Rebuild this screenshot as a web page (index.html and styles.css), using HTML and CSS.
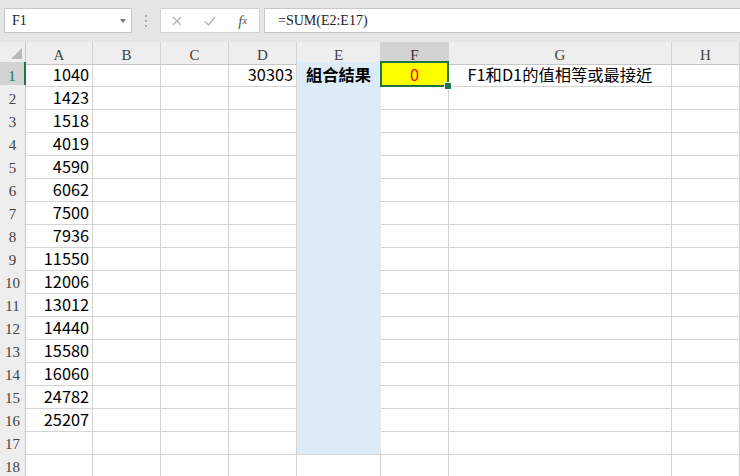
FILE: index.html
```html
<!DOCTYPE html>
<html lang="zh-TW">
<head>
    <meta charset="UTF-8">
    <title>組合結果</title>
    <link rel="stylesheet" href="styles.css">
</head>
<body>
    <div class="toolbar">
        <div class="name-box">
            <span>F1</span>
            <span class="arrow"></span>
        </div>
        <div class="grip"><span></span><span></span><span></span></div>
        <div class="fx-buttons">
            <span class="btn">
                <svg width="10" height="10" viewBox="0 0 10 10"><path d="M1 1L9 9M9 1L1 9" stroke="#b3b3b3" stroke-width="1.2" fill="none"/></svg>
            </span>
            <span class="btn">
                <svg width="12" height="10" viewBox="0 0 12 10"><path d="M1 5.5L4.5 9L11 1" stroke="#b3b3b3" stroke-width="1.3" fill="none"/></svg>
            </span>
            <span class="btn fx">f<sub>x</sub></span>
        </div>
        <div class="formula">=SUM(E2:E17)</div>
    </div>

    <div class="sheet">
        <div class="row head">
            <div class="corner">
                <svg width="26" height="19" viewBox="0 0 26 19"><polygon points="22,6 22,17 11,17" fill="#b8b8b8"/></svg>
            </div>
            <div class="ch">A</div><div class="ch">B</div><div class="ch">C</div><div class="ch">D</div>
            <div class="ch">E</div><div class="ch sel">F</div><div class="ch">G</div><div class="ch">H</div>
        </div>

        <div class="row">
            <div class="rh sel">1</div>
            <div class="c n">1040</div><div class="c"></div><div class="c"></div><div class="c n">30303</div>
            <div class="c ctr fill bold">組合結果</div>
            <div class="c ctr active">0</div>
            <div class="c ctr">F1和D1的值相等或最接近</div>
            <div class="c"></div>
        </div>
        <div class="row">
            <div class="rh">2</div>
            <div class="c n">1423</div><div class="c"></div><div class="c"></div><div class="c"></div>
            <div class="c fill"></div><div class="c"></div><div class="c"></div><div class="c"></div>
        </div>
        <div class="row">
            <div class="rh">3</div>
            <div class="c n">1518</div><div class="c"></div><div class="c"></div><div class="c"></div>
            <div class="c fill"></div><div class="c"></div><div class="c"></div><div class="c"></div>
        </div>
        <div class="row">
            <div class="rh">4</div>
            <div class="c n">4019</div><div class="c"></div><div class="c"></div><div class="c"></div>
            <div class="c fill"></div><div class="c"></div><div class="c"></div><div class="c"></div>
        </div>
        <div class="row">
            <div class="rh">5</div>
            <div class="c n">4590</div><div class="c"></div><div class="c"></div><div class="c"></div>
            <div class="c fill"></div><div class="c"></div><div class="c"></div><div class="c"></div>
        </div>
        <div class="row">
            <div class="rh">6</div>
            <div class="c n">6062</div><div class="c"></div><div class="c"></div><div class="c"></div>
            <div class="c fill"></div><div class="c"></div><div class="c"></div><div class="c"></div>
        </div>
        <div class="row">
            <div class="rh">7</div>
            <div class="c n">7500</div><div class="c"></div><div class="c"></div><div class="c"></div>
            <div class="c fill"></div><div class="c"></div><div class="c"></div><div class="c"></div>
        </div>
        <div class="row">
            <div class="rh">8</div>
            <div class="c n">7936</div><div class="c"></div><div class="c"></div><div class="c"></div>
            <div class="c fill"></div><div class="c"></div><div class="c"></div><div class="c"></div>
        </div>
        <div class="row">
            <div class="rh">9</div>
            <div class="c n">11550</div><div class="c"></div><div class="c"></div><div class="c"></div>
            <div class="c fill"></div><div class="c"></div><div class="c"></div><div class="c"></div>
        </div>
        <div class="row">
            <div class="rh">10</div>
            <div class="c n">12006</div><div class="c"></div><div class="c"></div><div class="c"></div>
            <div class="c fill"></div><div class="c"></div><div class="c"></div><div class="c"></div>
        </div>
        <div class="row">
            <div class="rh">11</div>
            <div class="c n">13012</div><div class="c"></div><div class="c"></div><div class="c"></div>
            <div class="c fill"></div><div class="c"></div><div class="c"></div><div class="c"></div>
        </div>
        <div class="row">
            <div class="rh">12</div>
            <div class="c n">14440</div><div class="c"></div><div class="c"></div><div class="c"></div>
            <div class="c fill"></div><div class="c"></div><div class="c"></div><div class="c"></div>
        </div>
        <div class="row">
            <div class="rh">13</div>
            <div class="c n">15580</div><div class="c"></div><div class="c"></div><div class="c"></div>
            <div class="c fill"></div><div class="c"></div><div class="c"></div><div class="c"></div>
        </div>
        <div class="row">
            <div class="rh">14</div>
            <div class="c n">16060</div><div class="c"></div><div class="c"></div><div class="c"></div>
            <div class="c fill"></div><div class="c"></div><div class="c"></div><div class="c"></div>
        </div>
        <div class="row">
            <div class="rh">15</div>
            <div class="c n">24782</div><div class="c"></div><div class="c"></div><div class="c"></div>
            <div class="c fill"></div><div class="c"></div><div class="c"></div><div class="c"></div>
        </div>
        <div class="row">
            <div class="rh">16</div>
            <div class="c n">25207</div><div class="c"></div><div class="c"></div><div class="c"></div>
            <div class="c fill"></div><div class="c"></div><div class="c"></div><div class="c"></div>
        </div>
        <div class="row">
            <div class="rh">17</div>
            <div class="c"></div><div class="c"></div><div class="c"></div><div class="c"></div>
            <div class="c fill last"></div><div class="c"></div><div class="c"></div><div class="c"></div>
        </div>
        <div class="row">
            <div class="rh">18</div>
            <div class="c"></div><div class="c"></div><div class="c"></div><div class="c"></div>
            <div class="c"></div><div class="c"></div><div class="c"></div><div class="c"></div>
        </div>
    </div>
</body>
</html>
```

FILE: styles.css
```css
* {
    margin: 0;
    padding: 0;
    box-sizing: border-box;
}

body {
    width: 740px;
    height: 476px;
    overflow: hidden;
    background-color: #fff;
    font-family: "Noto Sans CJK TC", sans-serif;
}

/* formula bar */
.toolbar {
    height: 42px;
    background-color: #e6e6e6;
    display: flex;
    align-items: flex-start;
    padding: 8px 0 0 4px;
}

.name-box {
    width: 128px;
    height: 25px;
    background-color: #fff;
    border: 1px solid #c6c6c6;
    display: flex;
    align-items: center;
    justify-content: space-between;
    padding: 0 5px 0 7px;
    font-family: "Liberation Serif", serif;
    font-size: 14px;
    color: #222;
}

.name-box .arrow {
    width: 0;
    height: 0;
    border-left: 3.5px solid transparent;
    border-right: 3.5px solid transparent;
    border-top: 4px solid #777;
}

.grip {
    width: 28px;
    height: 25px;
    display: flex;
    flex-direction: column;
    align-items: center;
    justify-content: center;
    gap: 3px;
}

.grip span {
    width: 2px;
    height: 2px;
    background-color: #ababab;
}

.fx-buttons {
    width: 100px;
    height: 25px;
    background-color: #fff;
    border: 1px solid #d2d2d2;
    display: flex;
    align-items: center;
}

.btn {
    width: 33px;
    display: flex;
    align-items: center;
    justify-content: center;
}

.fx {
    font-family: "Liberation Serif", serif;
    font-style: italic;
    font-size: 15px;
    color: #555;
    line-height: 14px;
}

.fx sub {
    font-size: 10px;
    vertical-align: -1px;
}

.formula {
    flex: 1;
    height: 25px;
    margin-left: 4px;
    background-color: #fff;
    border: 1px solid #c6c6c6;
    border-right: none;
    padding-left: 13px;
    font-family: "Liberation Serif", serif;
    font-size: 14px;
    line-height: 23px;
    color: #222;
}

/* sheet grid */
.row {
    display: grid;
    grid-template-columns: 26px 67px 68px 68px 68px 84px 68px 223px 68px;
    height: 23px;
}

.row.head {
    height: 20px;
}

.corner {
    background-color: #eeeeee;
    border-right: 1px solid #c6c6c6;
    border-bottom: 1px solid #c6c6c6;
}

.corner svg {
    display: block;
}

.ch {
    background-color: #eeeeee;
    border-right: 1px solid #d4d4d4;
    border-bottom: 1px solid #c6c6c6;
    text-align: center;
    font-family: "Liberation Serif", serif;
    font-size: 15px;
    line-height: 16px;
    padding-top: 5px;
    color: #444;
}

.ch.sel {
    background-color: #d3d3d3;
    border-bottom: 2px solid #217346;
    color: #333;
}

.rh {
    background-color: #eeeeee;
    border-right: 1px solid #c6c6c6;
    border-bottom: 1px solid #d4d4d4;
    text-align: center;
    font-family: "Liberation Serif", serif;
    font-size: 15px;
    line-height: 20px;
    padding-top: 4px;
    color: #444;
}

.rh.sel {
    background-color: #d3d3d3;
    border-right: 2px solid #217346;
    color: #217346;
}

.c {
    border-right: 1px solid #d4d4d4;
    border-bottom: 1px solid #d4d4d4;
    font-size: 16.3px;
    line-height: 20px;
    padding: 2px 3px 0;
    white-space: nowrap;
    overflow: hidden;
    color: #000;
}

.n {
    text-align: right;
}

.ctr {
    text-align: center;
}

.bold {
    font-weight: bold;
}

.fill {
    background-color: #ddebf7;
    border-right-color: #ddebf7;
    border-bottom-color: #ddebf7;
}

.fill.last {
    border-bottom-color: #d4d4d4;
}

.active {
    position: relative;
    overflow: visible;
    background-color: #ffff00;
    color: #ff0000;
}

.active::before {
    content: "";
    position: absolute;
    top: -1px;
    left: -1px;
    right: -1px;
    bottom: -1px;
    border: 2px solid #217346;
}

.active::after {
    content: "";
    position: absolute;
    right: -4px;
    bottom: -4px;
    width: 6px;
    height: 6px;
    background-color: #217346;
    border: 1px solid #fff;
}
```
